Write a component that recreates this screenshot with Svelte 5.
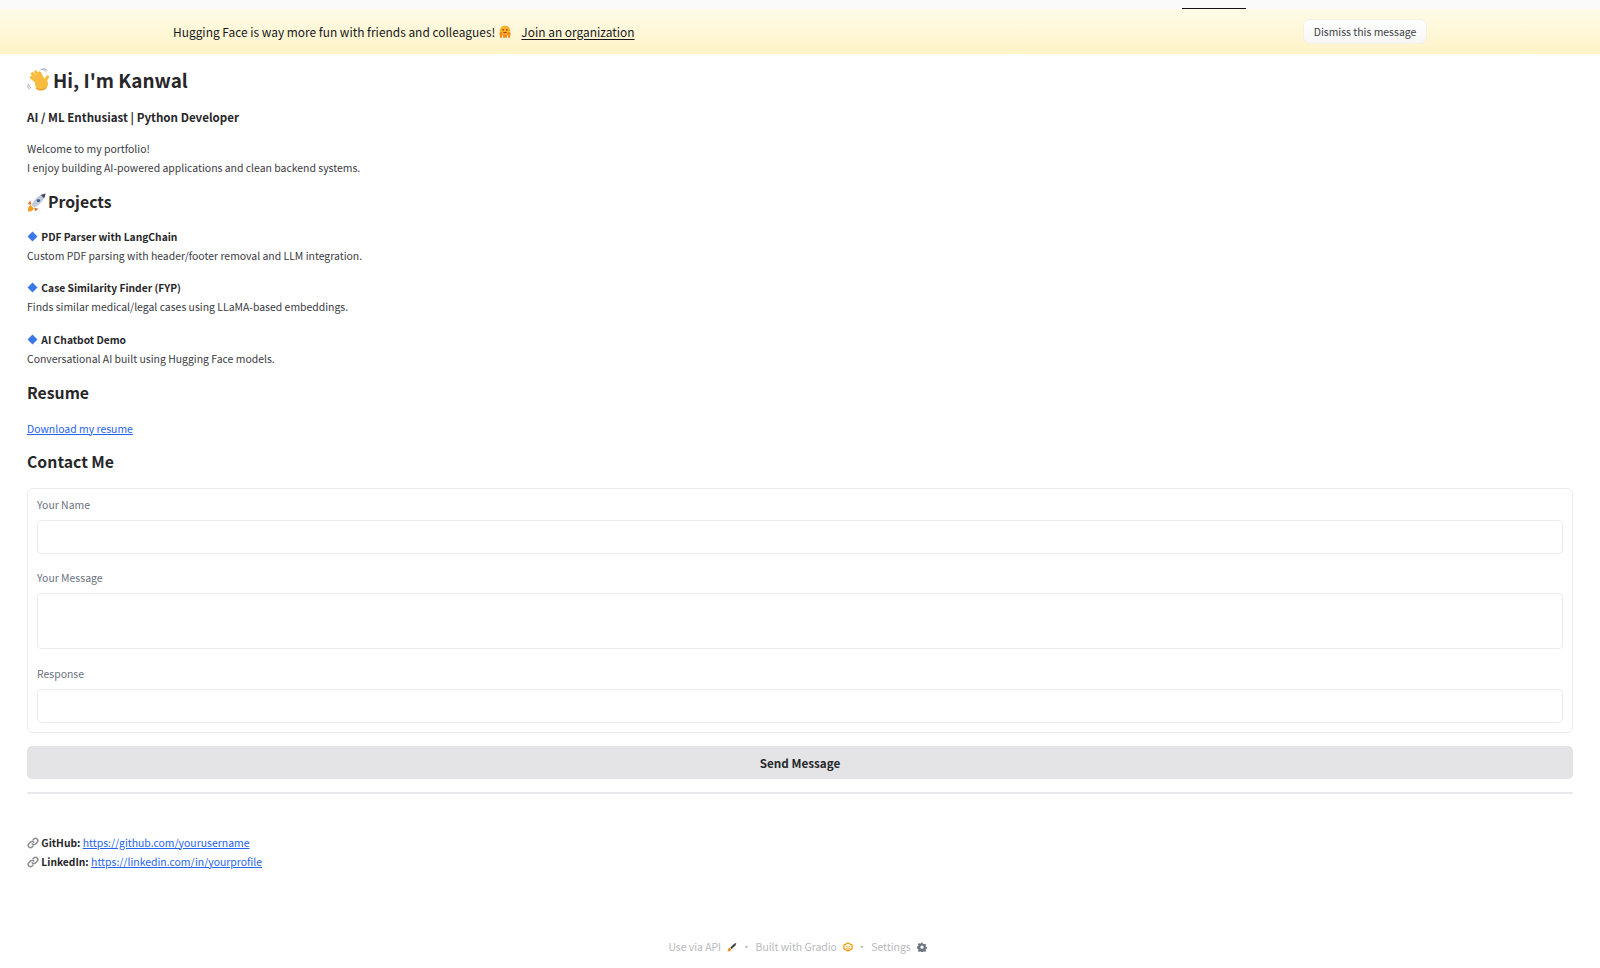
<script lang="ts">
  const projects = [
    { name: "PDF Parser with LangChain", desc: "Custom PDF parsing with header/footer removal and LLM integration." },
    { name: "Case Similarity Finder (FYP)", desc: "Finds similar medical/legal cases using LLaMA-based embeddings." },
    { name: "AI Chatbot Demo", desc: "Conversational AI built using Hugging Face models." }
  ];
  const links = [
    { label: "GitHub:", url: "https://github.com/yourusername" },
    { label: "LinkedIn:", url: "https://linkedin.com/in/yourprofile" }
  ];
</script>

{#snippet linkIcon()}
  <svg class="emoji" width="12" height="12" viewBox="0 0 16 16" fill="none" stroke="#8a8d91" stroke-width="2" stroke-linecap="round">
    <path d="M7 9.200a3 3 0 0 0 4.300 0l2.200-2.200a3 3 0 0 0-4.300-4.300L8 3.900" />
    <path d="M9 6.800a3 3 0 0 0-4.300 0L2.500 9a3 3 0 0 0 4.300 4.300L8 12.100" />
  </svg>
{/snippet}

<div class="topbar">
  <span class="tab-line"></span>
</div>

<div class="banner">
  <div class="banner-msg">
    <span>Hugging Face is way more fun with friends and colleagues!</span>
    <svg class="hug" width="14" height="14" viewBox="0 0 16 16">
      <circle cx="8" cy="6.500" r="6" fill="#ffb02e" />
      <path d="M1.500 9c1-1.500 3-1.500 3.500 .5l-.5 5H2.500zM14.500 9c-1-1.500-3-1.500-3.500 .5l.5 5h2z" fill="#f58a1f" />
      <path d="M6 11h4l.5 3.500h-5z" fill="#f58a1f" />
      <circle cx="5.800" cy="5.500" r="1" fill="#8a4b08" />
      <circle cx="10.200" cy="5.500" r="1" fill="#8a4b08" />
      <path d="M5.500 8c1.500 1.800 3.500 1.800 5 0z" fill="#c2410c" />
    </svg>
    <a class="join" href="#join">Join an organization</a>
  </div>
  <button class="dismiss">Dismiss this message</button>
</div>

<main>
  <h1>
    <svg class="wave" width="24" height="24" viewBox="0 0 24 24">
      <g fill="none" stroke="#f8bd3f" stroke-width="3.300" stroke-linecap="round">
        <path d="M10 14 4.500 9.500" />
        <path d="M11 12 5.500 5.800" />
        <path d="M13 11 8.800 4" />
        <path d="M15.500 11 12.500 5" />
        <path d="M17 15l3.500-6" />
      </g>
      <circle cx="14.500" cy="16" r="6.500" fill="#f8bd3f" />
      <path d="M9.500 20.500c2.500 2 6.500 2 9-.5" fill="none" stroke="#ee9f2c" stroke-width="1.200" stroke-linecap="round" />
      <path d="M14 1.500c2-.3 3.700.3 5 1.800M16 .6c1.500 0 2.800.5 4 1.600M1.500 16c.2 1.600 1 3 2.300 4M.5 18c.3 1.200.9 2.200 1.800 3" fill="none" stroke="#9aa3ad" stroke-width=".9" stroke-linecap="round" />
    </svg>
    Hi, I'm Kanwal
  </h1>
  <h3>AI / ML Enthusiast | Python Developer</h3>
  <p class="intro">Welcome to my portfolio!<br />I enjoy building AI-powered applications and clean backend systems.</p>

  <h2 class="projects">
    <svg class="rocket" width="19" height="19" viewBox="0 0 20 20">
      <path d="M1 19.500c-.5-3 .5-5.500 2.800-6.800l3.500 3.500C6 18.500 4 19.500 1 19.500z" fill="#f59e1f" />
      <path d="M3.500 8 .8 11.500l3.700.8zM12 16.500 8.500 19.300l-.8-3.700z" fill="#e8622a" />
      <path d="M4.800 12.500C7.500 6.500 12 2 19.500.5 18 8 13.500 12.500 7.500 15.200z" fill="#c3cbd6" />
      <path d="M14.500 2 19.500.5c-.3 1.800-.8 3.400-1.500 5z" fill="#3f4a5c" />
      <circle cx="12" cy="8" r="1.800" fill="#3b5f9e" />
    </svg>
    Projects
  </h2>

  {#each projects as p}
    <p class="project">
      <svg class="diamond" width="11" height="11" viewBox="0 0 10 10"><path d="M5 .5 9.500 5 5 9.500.5 5z" fill="#3b78e7" /></svg>
      <strong>{p.name}</strong><br />{p.desc}
    </p>
  {/each}

  <h2 class="resume">Resume</h2>
  <p class="download"><a href="#resume">Download my resume</a></p>

  <h2 class="contact">Contact Me</h2>

  <form class="form-box">
    <label>
      <span>Your Name</span>
      <input type="text" />
    </label>
    <label>
      <span>Your Message</span>
      <textarea rows="2"></textarea>
    </label>
    <label>
      <span>Response</span>
      <input type="text" />
    </label>
  </form>

  <button class="send">Send Message</button>
  <hr />

  <div class="links">
    {#each links as l}
      <div>{@render linkIcon()} <strong>{l.label}</strong> <a href={l.url}>{l.url}</a></div>
    {/each}
  </div>
</main>

<footer>
  <span>Use via API</span>
  <svg class="fi" width="10" height="10" viewBox="0 0 16 16">
    <path d="M1 15c0-3 1-5 3-6l3 3c-1 2-3 3-6 3z" fill="#f28c1e" />
    <path d="M5 9 11 3l4-2-1.500 4.500L7.500 11z" fill="#3f3f46" />
  </svg>
  <span class="dot">·</span>
  <span>Built with Gradio</span>
  <svg class="fi" width="10" height="10" viewBox="0 0 16 16" fill="none" stroke="#f59e0b" stroke-width="2">
    <path d="M8 1.500 14.500 5v6L8 14.500 1.500 11V5z" />
    <path d="M4.500 6.500 8 8.500l3.500-2M4.500 9.500 8 11.500l3.500-2" stroke-width="1.300" />
  </svg>
  <span class="dot">·</span>
  <span>Settings</span>
  <svg class="fi" width="10" height="10" viewBox="0 0 16 16">
    <path fill-rule="evenodd" d="M6.800 1h2.400l.4 2 1.500.7 1.800-1 1.700 1.700-1 1.800.6 1.500 2 .4v2.400l-2 .4-.6 1.500 1 1.800-1.700 1.700-1.800-1-1.500.6-.4 2H6.800l-.4-2-1.500-.6-1.800 1-1.700-1.700 1-1.800-.6-1.500-2-.4V7.100l2-.4.6-1.500-1-1.800 1.700-1.700 1.800 1 1.500-.7zM8 5.500a2.700 2.700 0 1 0 0 5.400 2.700 2.700 0 0 0 0-5.400z" fill="#6b7280" />
  </svg>
</footer>

<style>
  :global(body) {
    margin: 0;
    background: #fff;
    font-family: "Noto Sans CJK SC", "Noto Sans", sans-serif;
    color: #3a3a3f;
  }

  .topbar {
    height: 9px;
    background: #fafafb;
    position: relative;
  }

  .tab-line {
    position: absolute;
    left: 1182px;
    width: 64px;
    bottom: 0;
    height: 1px;
    background: #111;
  }

  .banner {
    height: 45px;
    box-sizing: border-box;
    padding: 0 173px;
    display: flex;
    align-items: center;
    justify-content: space-between;
    background: linear-gradient(to bottom, #fffbe8, #fef3c7);
  }

  .banner-msg {
    display: flex;
    align-items: center;
    font-size: 11.93px;
    line-height: 20px;
    color: #18181b;
  }

  .hug {
    margin: 0 9px 0 3px;
  }

  .join {
    color: #18181b;
    text-decoration: underline;
    text-underline-offset: 2px;
  }

  .dismiss {
    height: 25px;
    width: 124px;
    padding: 0;
    border: 1px solid #f3f0e4;
    border-radius: 7px;
    background: linear-gradient(to bottom, #fff, #f6f6f6);
    font: inherit;
    font-size: 10.45px;
    color: #3f3f46;
  }

  main {
    padding: 0 27px;
  }

  h1 {
    margin: 0;
    padding-top: 11px;
    display: flex;
    align-items: center;
    gap: 2px;
    font-size: 18.9px;
    line-height: 29px;
    font-weight: 600;
    color: #27272a;
  }

  h3 {
    margin: 13px 0 0;
    font-size: 11.6px;
    line-height: 20px;
    font-weight: 600;
    color: #27272a;
  }

  h2 {
    margin: 0;
    font-size: 15.8px;
    line-height: 24px;
    font-weight: 600;
    color: #27272a;
  }

  p {
    margin: 0;
    font-size: 10.45px;
    line-height: 19px;
  }

  .intro {
    margin-top: 12px;
  }

  .projects {
    margin-top: 13px;
    display: flex;
    align-items: center;
    gap: 2px;
  }

  .project {
    margin-top: 13.5px;
  }

  .projects + .project {
    margin-top: 12.5px;
  }

  .project strong,
  .links strong {
    font-size: 10.25px;
    font-weight: 600;
    color: #27272a;
  }

  .diamond {
    vertical-align: -1px;
    margin-right: 1px;
  }

  .resume {
    margin-top: 13px;
  }

  .download {
    margin-top: 14px;
  }

  a {
    color: #2563eb;
    text-decoration: underline;
  }

  .contact {
    margin-top: 12.5px;
  }

  .form-box {
    margin-top: 13.5px;
    height: 245px;
    box-sizing: border-box;
    padding: 8px 9px;
    border: 1px solid #ececee;
    border-radius: 6px;
    display: flex;
    flex-direction: column;
    gap: 16.5px;
  }

  label {
    display: block;
  }

  label span {
    display: block;
    margin-bottom: 7px;
    font-size: 10.45px;
    line-height: 16px;
    color: #6b7280;
  }

  input,
  textarea {
    display: block;
    width: 100%;
    box-sizing: border-box;
    height: 34px;
    border: 1px solid #ececee;
    border-radius: 4px;
    background: #fff;
    resize: none;
    outline: none;
  }

  textarea {
    height: 56px;
  }

  .send {
    display: block;
    width: 100%;
    height: 33.5px;
    margin-top: 13px;
    border: none;
    border-radius: 5px;
    background: #e4e4e7;
    font: inherit;
    font-size: 11.7px;
    font-weight: 600;
    color: #27272a;
  }

  hr {
    margin: 12.5px 0 0;
    border: none;
    border-top: 2px solid #e9e9ec;
  }

  .links {
    margin-top: 39px;
    font-size: 10.45px;
    line-height: 19px;
  }

  .emoji {
    vertical-align: -2px;
  }

  footer {
    position: absolute;
    top: 938px;
    left: 0;
    right: 0;
    padding-right: 5px;
    display: flex;
    justify-content: center;
    align-items: center;
    gap: 4px;
    font-size: 10.4px;
    line-height: 18px;
    color: #b8b8bc;
  }

  .fi {
    margin-left: 2px;
  }
</style>
